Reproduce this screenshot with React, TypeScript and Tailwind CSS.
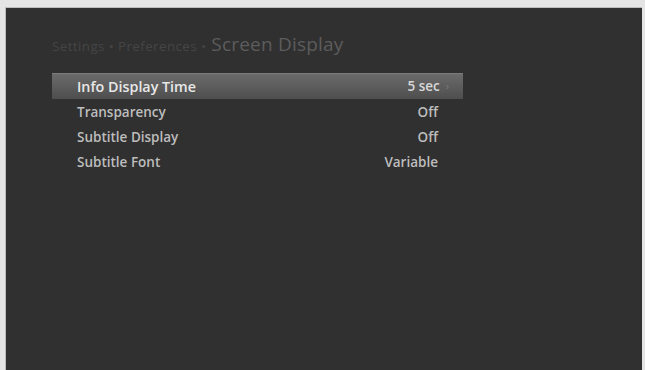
import React from "react";

const rows = [
  { label: "Info Display Time", value: "5 sec", active: true },
  { label: "Transparency", value: "Off" },
  { label: "Subtitle Display", value: "Off" },
  { label: "Subtitle Font", value: "Variable" },
];

export default function App() {
  return (
    <div
      className="w-[645px] h-[370px] bg-[#e4e4e4] pl-[5px] pr-[3px] pt-[7px] overflow-hidden"
      style={{ fontFamily: '"Open Sans", "DejaVu Sans", sans-serif' }}
    >
      <div className="h-[363px] bg-[#303030] border-l border-t border-[#bcbcbc] pl-[46px] pt-[22px]">
        <div className="flex items-baseline gap-[5px] h-[24px]">
          <span className="text-[13.4px] text-[#454545] tracking-[0.4px]">Settings • Preferences •</span>
          <span className="text-[19px] text-[#5c5c5c] tracking-[0.2px]">Screen Display</span>
        </div>
        <div className="mt-[19px] w-[411px] flex flex-col">
          {rows.map((r) =>
            r.active ? (
              <div
                key={r.label}
                className="h-[26px] flex items-center pl-[25px] pr-[14px] bg-gradient-to-b from-[#6b6b6b] to-[#4e4e4e] border-t border-[#7a7a7a] mb-[1px]"
              >
                <span className="text-[14.3px] font-semibold text-[#e8e8e8] flex-1">{r.label}</span>
                <span className="text-[13.5px] font-semibold text-[#d8d8d8]">{r.value}</span>
                <span className="text-[11px] text-[#7c7c7c] ml-[6px]">›</span>
              </div>
            ) : (
              <div key={r.label} className="h-[25px] flex items-center pl-[25px] pr-[25px]">
                <span className="text-[13.5px] font-semibold text-[#bdbdbd] flex-1">{r.label}</span>
                <span className="text-[13.5px] font-semibold text-[#bdbdbd]">{r.value}</span>
              </div>
            )
          )}
        </div>
      </div>
    </div>
  );
}
